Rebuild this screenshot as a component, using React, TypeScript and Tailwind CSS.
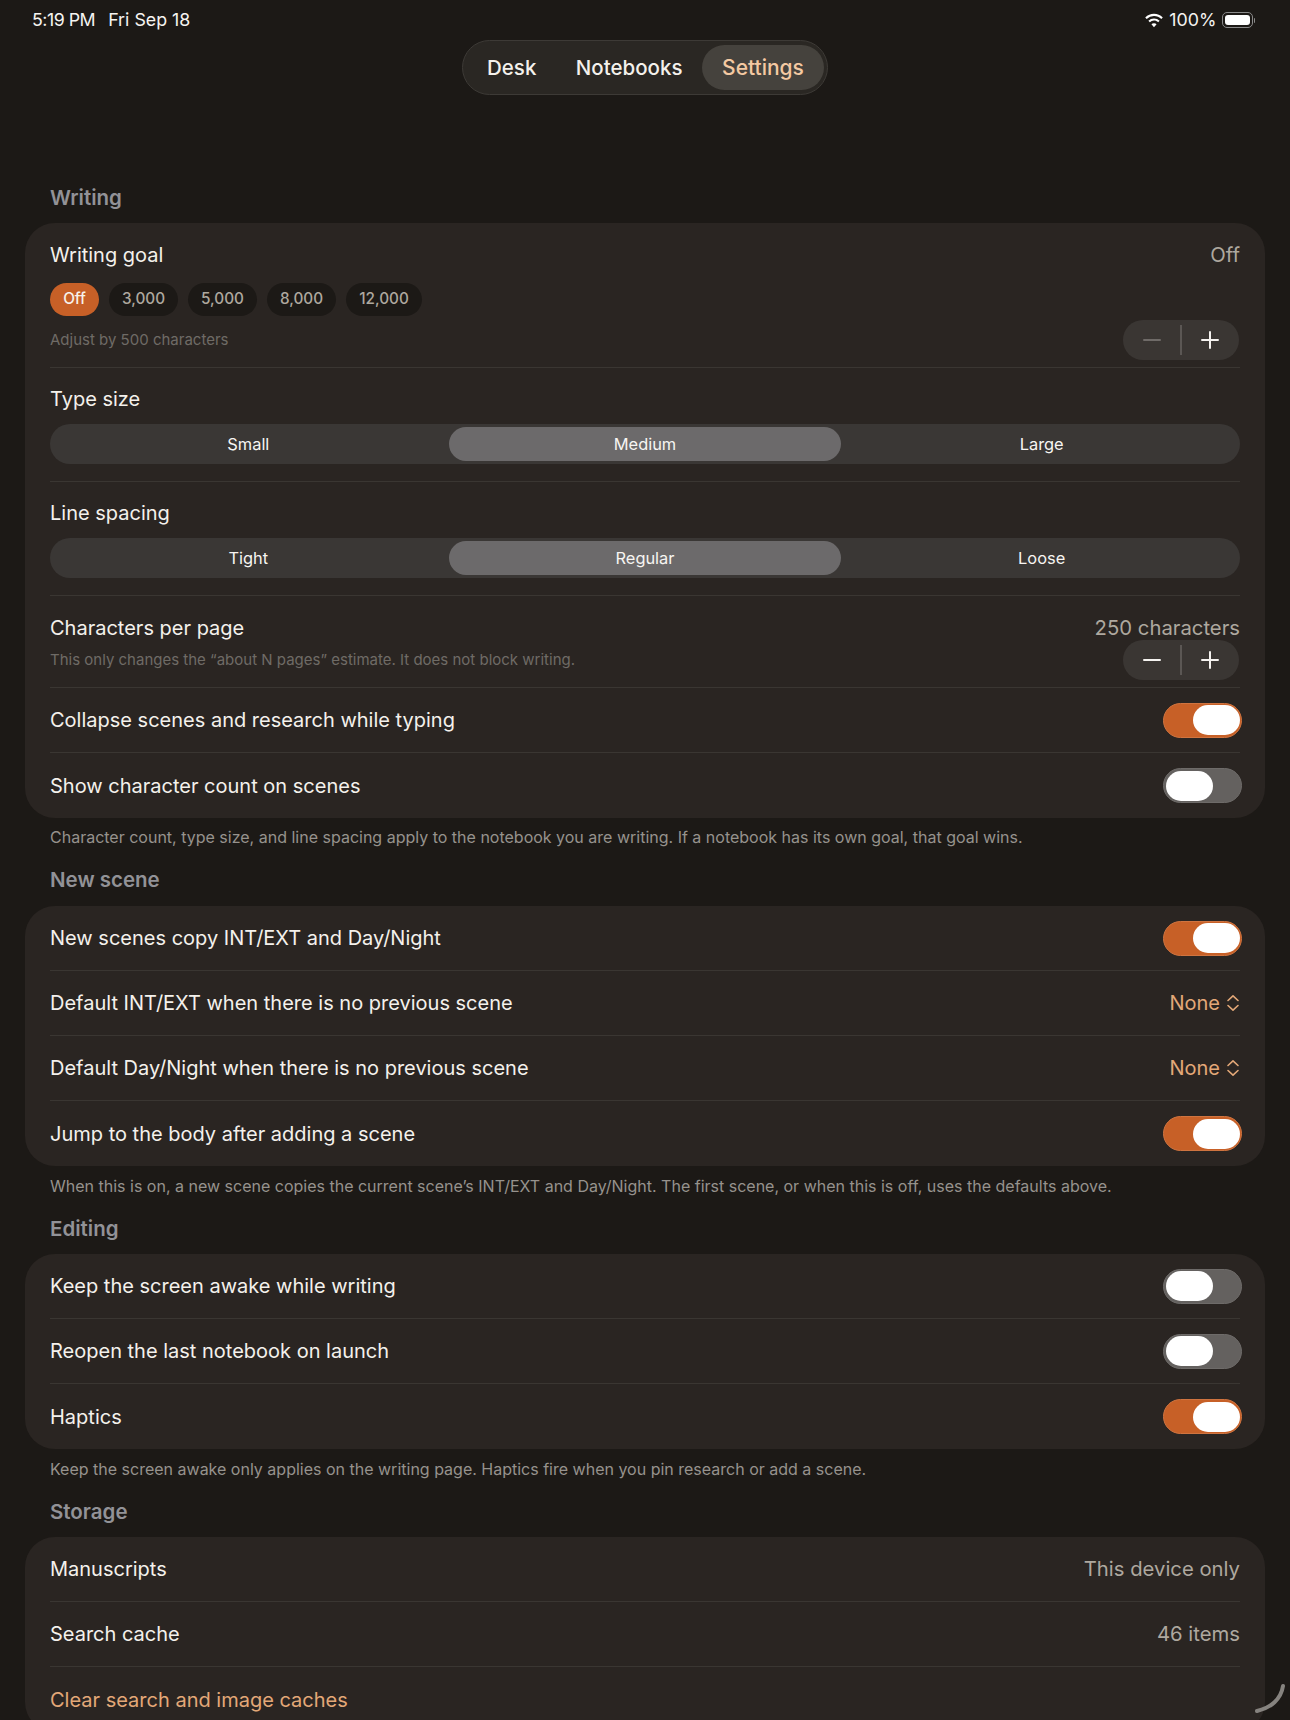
import React from "react";

const FONT = "[font-family:Inter,'Liberation_Sans',sans-serif]";

function Toggle({ on }: { on?: boolean }) {
  return on ? (
    <div className="flex h-[35px] w-[79px] -mr-[2px] items-center justify-end rounded-full bg-[#c76027] border-[1.5px] border-[#cf7440] pr-[1.5px]">
      <div className="h-[30px] w-[47px] rounded-full bg-white" />
    </div>
  ) : (
    <div className="flex h-[35px] w-[79px] -mr-[2px] items-center justify-start rounded-full bg-[#64615f] border-[1.5px] border-[#6e6b69] pl-[1.5px]">
      <div className="h-[30px] w-[47px] rounded-full bg-white" />
    </div>
  );
}

function Stepper({ dimMinus }: { dimMinus?: boolean }) {
  return (
    <div className="mr-[1px] flex h-[40px] w-[116px] items-center rounded-full bg-[#3a3633]">
      <div className="flex flex-1 items-center justify-center">
        <svg width="20" height="20" viewBox="0 0 20 20">
          <path d="M2 10h16" stroke={dimMinus ? "#6f6b68" : "#f5f3f0"} strokeWidth="2" strokeLinecap="round" />
        </svg>
      </div>
      <div className="h-[30px] w-[1.5px] bg-[#5b5754]" />
      <div className="flex flex-1 items-center justify-center">
        <svg width="20" height="20" viewBox="0 0 20 20">
          <path d="M2 10h16M10 2v16" stroke="#f5f3f0" strokeWidth="2" strokeLinecap="round" />
        </svg>
      </div>
    </div>
  );
}

function Segmented({ options, active }: { options: string[]; active: string }) {
  return (
    <div className="mt-[11px] grid h-[40px] grid-cols-3 items-center rounded-full bg-[#3a3735]">
      {options.map((o) => (
        <div
          key={o}
          className={
            "mx-[2.5px] flex h-[34px] items-center justify-center rounded-full text-[16.4px] font-normal text-[#f7f5f2] " +
            (o === active ? "bg-[#6c6a6b]" : "")
          }
        >
          {o}
        </div>
      ))}
    </div>
  );
}

function Row({ label, last, children }: { label: string; last?: boolean; children?: React.ReactNode }) {
  return (
    <div className={"flex h-[65px] items-center justify-between " + (last ? "" : "border-b-[1.5px] border-[#3a3632]")}>
      <span className="text-[20px] text-[#f4f1ec]">{label}</span>
      {children}
    </div>
  );
}

function Picker() {
  return (
    <div className="flex items-center gap-[6px] text-[20px] text-[#e3a878]">
      None
      <svg width="14" height="18" viewBox="0 0 14 18" fill="none" stroke="#e3a878" strokeWidth="1.6" strokeLinecap="round" strokeLinejoin="round">
        <path d="M2 6.5 7 1.8l5 4.7M2 11.5l5 4.7 5-4.7" />
      </svg>
    </div>
  );
}

function Heading({ children }: { children: React.ReactNode }) {
  return <h2 className="mb-[11px] mt-[19px] h-[28px] pl-[25px] text-[20.5px] font-semibold leading-[28px] text-[#929297]">{children}</h2>;
}

function Note({ children }: { children: React.ReactNode }) {
  return <p className="mt-[10px] h-[20px] pl-[25px] text-[16px] leading-[20px] text-[#96928d]">{children}</p>;
}

function Card({ children }: { children: React.ReactNode }) {
  return <div className="rounded-[30px] bg-[#2a2522] px-[25px]">{children}</div>;
}

export default function App() {
  return (
    <div className={"relative h-[1720px] w-[1290px] overflow-hidden bg-[#1c1916] " + FONT}>
      {/* Status bar */}
      <div className="flex h-[40px] items-center justify-between pl-[32px] pr-[35px] text-[17.8px] text-[#f6f4f1]">
        <div className="flex gap-[13px]">
          <span className="tracking-[-0.5px]">5:19 PM</span>
          <span>Fri Sep 18</span>
        </div>
        <div className="flex items-center gap-[6px]">
          <svg width="18" height="15" viewBox="1 0 16 13" fill="#ffffff">
            <path d="M9 2.6c2.5 0 4.8 1 6.5 2.6l1.3-1.4A11.4 11.4 0 0 0 9 .6 11.4 11.4 0 0 0 1.2 3.8l1.3 1.4A9.4 9.4 0 0 1 9 2.6Z" />
            <path d="M9 6.6c1.4 0 2.7.5 3.7 1.5L14 6.7A7.3 7.3 0 0 0 9 4.7a7.3 7.3 0 0 0-5 2l1.3 1.4A5.3 5.3 0 0 1 9 6.6Z" />
            <path d="M9 8.9c-.9 0-1.7.3-2.3.9L9 12.4l2.3-2.6c-.6-.6-1.4-.9-2.3-.9Z" />
          </svg>
          <span>100%</span>
          <div className="-ml-[1px] flex items-center">
            <div className="flex h-[16px] w-[31px] items-center rounded-[5px] border border-[#8a8a8a] p-[2px]">
              <div className="h-full w-full rounded-[3px] bg-white" />
            </div>
            <div className="ml-[1px] h-[5px] w-[1.5px] rounded-r-full bg-[#8a8a8a]" />
          </div>
        </div>
      </div>

      {/* Tabs */}
      <div className="flex justify-center">
        <div className="flex h-[55px] w-[366px] items-center justify-between rounded-full border-[1.5px] border-[#3d3a36] bg-[#2a2723] pl-[24px] pr-[3px] text-[20.5px] font-medium">
          <span className="pt-[1px] text-[#f4f1ec]">Desk</span>
          <span className="ml-[20px] pt-[1px] text-[#f4f1ec]">Notebooks</span>
          <div className="flex h-[45px] w-[122px] items-center justify-center rounded-full bg-[#45423d] text-[21px] text-[#f4c9a2]">Settings</div>
        </div>
      </div>

      <div className="px-[25px] pt-[89px]">
        {/* Writing */}
        <h2 className="mb-[11px] h-[28px] pl-[25px] text-[20.5px] font-semibold leading-[28px] text-[#929297]">Writing</h2>
        <Card>
          <div className="h-[145px] border-b-[1.5px] border-[#3a3632] pt-[18px]">
            <div className="flex h-[28px] items-center justify-between text-[20.3px]">
              <span className="text-[20px] text-[#f4f1ec]">Writing goal</span>
              <span className="text-[#aea89f]">Off</span>
            </div>
            <div className="mt-[14px] flex gap-[10px] text-[15.3px] font-medium">
              <div className="flex h-[33px] w-[49px] items-center justify-center rounded-full bg-[#c76027] text-[#f7f2ec]">Off</div>
              <div className="flex h-[33px] w-[69px] items-center justify-center rounded-full bg-[#1c1916] text-[#aea89f]">3,000</div>
              <div className="flex h-[33px] w-[69px] items-center justify-center rounded-full bg-[#1c1916] text-[#aea89f]">5,000</div>
              <div className="flex h-[33px] w-[69px] items-center justify-center rounded-full bg-[#1c1916] text-[#aea89f]">8,000</div>
              <div className="flex h-[33px] w-[76px] items-center justify-center rounded-full bg-[#1c1916] text-[#aea89f]">12,000</div>
            </div>
            <div className="mt-[4px] flex items-center justify-between">
              <span className="text-[15px] text-[#6f6b66]">Adjust by 500 characters</span>
              <Stepper dimMinus />
            </div>
          </div>
          <div className="h-[114px] border-b-[1.5px] border-[#3a3632] pt-[17px]">
            <div className="h-[28px] text-[20px] leading-[28px] text-[#f4f1ec]">Type size</div>
            <Segmented options={["Small", "Medium", "Large"]} active="Medium" />
          </div>
          <div className="h-[114px] border-b-[1.5px] border-[#3a3632] pt-[17px]">
            <div className="h-[28px] text-[20px] leading-[28px] text-[#f4f1ec]">Line spacing</div>
            <Segmented options={["Tight", "Regular", "Loose"]} active="Regular" />
          </div>
          <div className="h-[92px] border-b-[1.5px] border-[#3a3632] pt-[18px]">
            <div className="flex h-[28px] items-center justify-between text-[20.3px]">
              <span className="text-[20px] text-[#f4f1ec]">Characters per page</span>
              <span className="text-[#aea89f]">250 characters</span>
            </div>
            <div className="-mt-[2px] flex items-center justify-between">
              <span className="text-[15px] text-[#6f6b66]">This only changes the “about N pages” estimate. It does not block writing.</span>
              <Stepper />
            </div>
          </div>
          <Row label="Collapse scenes and research while typing"><Toggle on /></Row>
          <div className="-mb-[1px]">
            <Row label="Show character count on scenes" last><Toggle /></Row>
          </div>
        </Card>
        <Note>Character count, type size, and line spacing apply to the notebook you are writing. If a notebook has its own goal, that goal wins.</Note>

        <Heading>New scene</Heading>
        <div className="pt-[1px]">
          <Card>
            <Row label="New scenes copy INT/EXT and Day/Night"><Toggle on /></Row>
            <Row label="Default INT/EXT when there is no previous scene"><Picker /></Row>
            <Row label="Default Day/Night when there is no previous scene"><Picker /></Row>
            <Row label="Jump to the body after adding a scene" last><Toggle on /></Row>
          </Card>
        </div>
        <Note>When this is on, a new scene copies the current scene’s INT/EXT and Day/Night. The first scene, or when this is off, uses the defaults above.</Note>

        <Heading>Editing</Heading>
        <Card>
          <Row label="Keep the screen awake while writing"><Toggle /></Row>
          <Row label="Reopen the last notebook on launch"><Toggle /></Row>
          <Row label="Haptics" last><Toggle on /></Row>
        </Card>
        <Note>Keep the screen awake only applies on the writing page. Haptics fire when you pin research or add a scene.</Note>

        <Heading>Storage</Heading>
        <Card>
          <Row label="Manuscripts"><span className="text-[20.3px] text-[#aea89f]">This device only</span></Row>
          <Row label="Search cache"><span className="text-[20.3px] text-[#aea89f]">46 items</span></Row>
          <div className="flex h-[65px] items-center text-[20px] text-[#e3a878]">Clear search and image caches</div>
        </Card>
      </div>

      {/* Scroll corner indicator */}
      <svg className="absolute left-[1252px] top-[1682px]" width="36" height="34" viewBox="0 0 36 34" fill="none">
        <path d="M31 4C29 17 19 26 5 29" stroke="#86837f" strokeWidth="4" strokeLinecap="round" />
      </svg>
    </div>
  );
}
